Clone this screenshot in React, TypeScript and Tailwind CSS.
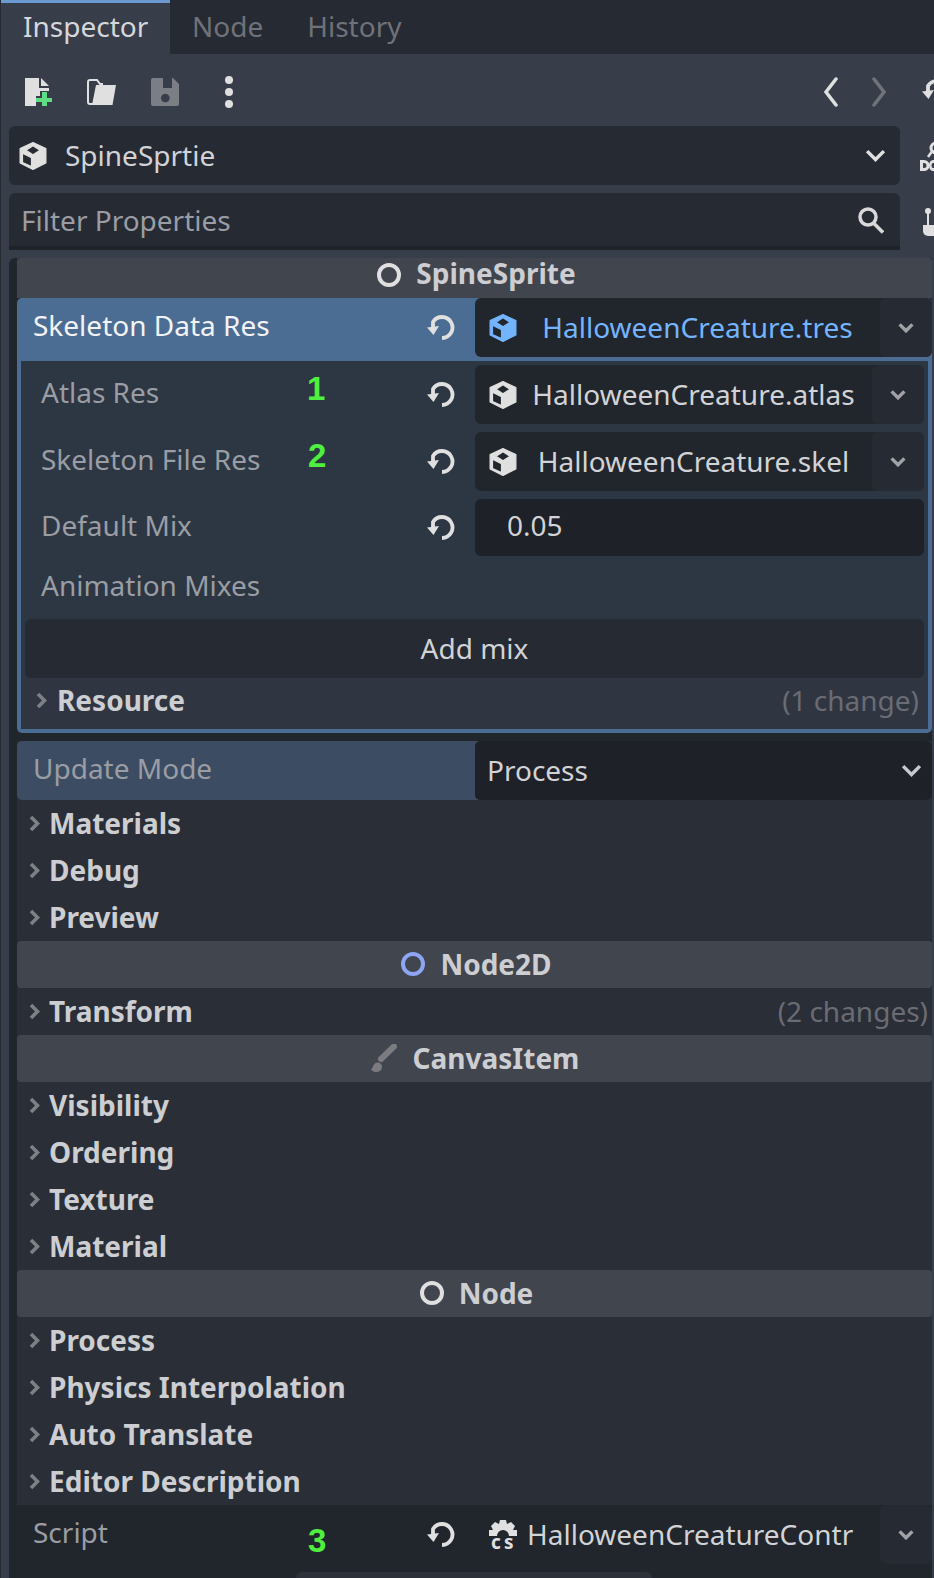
import React from "react";

function ResetIcon() {
  return (
    <svg width="28" height="26" viewBox="0 0 28 26" className="shrink-0">
      <path d="M6 13V7A10.500 10.500 0 1 1 15 23" fill="none" stroke="#e0e0e0" strokeWidth="3.800" />
      <path d="M0 12.500L12 11L6.500 20Z" fill="#e0e0e0" />
    </svg>
  );
}

function CubeIcon({ color = "#e0e0e0" }: { color?: string }) {
  return (
    <svg width="28" height="28" viewBox="0 0 28 28" className="shrink-0">
      <path
        fillRule="evenodd"
        stroke={color}
        strokeWidth="1.200"
        strokeLinejoin="round"
        d="M14 .6L26.900 6.500V21L14 27.400L1.100 21V6.500ZM14 3.800L7 8.300L14 12.800L21 8.300ZM3.500 11.300V20.500L12.500 24.500V15.700Z"
        fill={color}
      />
    </svg>
  );
}

function GearIcon() {
  return (
    <svg width="28" height="34" viewBox="0 0 28 34" className="shrink-0 mt-[5px]">
      <path
        d="M11 0h6l1 4 4-2 4 4-2 4h4v6h-8a6 6 0 0 0-12 0H0v-6h4L2 6l4-4 4 2z"
        fill="#e0e0e0"
      />
      <text x="2" y="28.500" fontSize="19" fontWeight="700" fill="#e0e0e0" fontFamily="'Noto Sans', sans-serif">
        c
      </text>
      <text x="15" y="28.500" fontSize="19" fontWeight="700" fill="#e0e0e0" fontFamily="'Noto Sans', sans-serif">
        s
      </text>
    </svg>
  );
}

function ChevronDown({ size = 16, color = "#a0a2a6" }: { size?: number; color?: string }) {
  return (
    <svg width={size} height={size * 0.7} viewBox="0 0 20 14" className="shrink-0">
      <path d="M2 3l8 8 8-8" fill="none" stroke={color} strokeWidth={(3.4 * 20) / size} />
    </svg>
  );
}

function ChevronRight({ color = "#7d8085" }: { color?: string }) {
  return (
    <svg width="11" height="17" viewBox="0 0 11 17" className="shrink-0">
      <path d="M2 2l6.500 6.500L2 15" fill="none" stroke={color} strokeWidth="3.600" />
    </svg>
  );
}

function Ring({ color = "#e0e0e0" }: { color?: string }) {
  return (
    <svg width="24" height="24" viewBox="0 0 24 24" className="shrink-0 ml-[4px]">
      <circle cx="12" cy="12" r="10" fill="none" stroke={color} strokeWidth="4" />
    </svg>
  );
}

function Brush() {
  return (
    <svg width="28" height="28" viewBox="0 0 28 28" className="shrink-0">
      <path d="M11 15L24 2.500" stroke="#7b7c80" strokeWidth="6" strokeLinecap="round" fill="none" />
      <path d="M1 25.500C3 25 3 19 7 18.500c3-.3 5.500 2 5 5-.5 3-3 4.500-6 4.500-2.500 0-4-1-5-2.500z" fill="#7b7c80" />
    </svg>
  );
}

function SectionHeader({ title, icon }: { title: string; icon: React.ReactNode }) {
  return (
    <div className="h-[47px] shrink-0 flex items-center justify-center gap-[15px] pb-[1px] bg-[#41454e] rounded-[4px] font-bold text-[#cdced1]">
      {icon}
      <span className="-mt-[1px]">{title}</span>
    </div>
  );
}

function Group({ title, note }: { title: string; note?: string }) {
  return (
    <div className="h-[47px] shrink-0 flex items-center pl-[12px] pr-[4px] pb-[1px]">
      <ChevronRight />
      <span className="ml-[9px] -mt-[1px] font-bold text-[#cdced1]">{title}</span>
      {note && <span className="ml-auto -mt-[1px] text-[#696c73]">{note}</span>}
    </div>
  );
}

function Mark({ n, className }: { n: string; className: string }) {
  return (
    <span
      className={`absolute font-['Liberation_Sans',sans-serif] font-bold text-[33px] leading-none text-[#4fef3f] ${className}`}
    >
      {n}
    </span>
  );
}

function ResourceField({ icon, name, nameClass }: { icon: React.ReactNode; name: string; nameClass: string }) {
  return (
    <div className="flex items-center h-[59px] pl-[14px] rounded-[6px] bg-[#21262c]">
      {icon}
      <span className={`flex-1 text-center pr-[2px] -mt-[2px] ${nameClass}`}>{name}</span>
      <div className="w-[52px] h-full flex items-center justify-center rounded-[6px] bg-[#262a32]">
        <ChevronDown />
      </div>
    </div>
  );
}

function SubRow({ label, mark, children }: { label: string; mark?: React.ReactNode; children: React.ReactNode }) {
  return (
    <div className="relative flex items-center">
      <span className="w-[406px] shrink-0 pl-[20px] text-[#9a9da3] -mt-[6px]">{label}</span>
      <ResetIcon />
      <div className="ml-[20px] flex-1 mr-[4px]">{children}</div>
      {mark}
    </div>
  );
}

export default function App() {
  return (
    <div className="w-[934px] h-[1578px] overflow-hidden flex flex-col border-l-[1px] border-[#262a33] bg-[#383d4a] text-[28px] leading-none font-['Noto_Sans',sans-serif]">
      <div className="h-[54px] shrink-0 flex bg-[#262a33]">
        <div className="w-[169px] border-t-[3px] border-[#6a9ad0] bg-[#383d4a] pl-[22px] flex items-center text-[#d6d7da] pb-[6px]">
          Inspector
        </div>
        <div className="ml-[22px] flex items-center text-[#6f7278] pb-[2px]">Node</div>
        <div className="ml-[44px] flex items-center text-[#6f7278] pb-[2px]">History</div>
      </div>

      <div className="h-[72px] shrink-0 flex items-center pl-[24px] pt-[4px]">
        <svg width="28" height="28" viewBox="0 0 28 28">
          <path d="M0 0H14V10H24V13H15V18H11V28H0Z" fill="#e0e0e0" />
          <path d="M16 0L24 8H16Z" fill="#e0e0e0" />
          <path d="M17 14h5v6h5v4h-5v4h-5v-4h-6v-4h6z" fill="#5fdd84" />
        </svg>
        <svg width="29" height="28" viewBox="0 0 29 28" className="ml-[34px]">
          <path d="M6 26H3a2 2 0 0 1-2-2V4a2 2 0 0 1 2-2h7l3 4h3" fill="none" stroke="#e0e0e0" strokeWidth="2" />
          <path d="M9 7H29L25.500 27H5Z" fill="#e0e0e0" />
        </svg>
        <svg width="28" height="28" viewBox="0 0 28 28" className="ml-[35px]">
          <path
            fillRule="evenodd"
            d="M2 0H22L28 6V26a2 2 0 0 1-2 2H2a2 2 0 0 1-2-2V2A2 2 0 0 1 2 0ZM12 0V10H21V0ZM14.300 15.700a4.300 4.300 0 1 0 .01 0Z"
            fill="#7b7e85"
          />
        </svg>
        <svg width="10" height="34" viewBox="0 0 10 34" className="ml-[45px]">
          <circle cx="5" cy="5" r="4" fill="#e0e0e0" />
          <circle cx="5" cy="17" r="4" fill="#e0e0e0" />
          <circle cx="5" cy="29" r="4" fill="#e0e0e0" />
        </svg>
        <svg width="14" height="30" viewBox="0 0 14 30" className="ml-auto">
          <path d="M12 2L2 15l10 13" fill="none" stroke="#e0e0e0" strokeWidth="3.500" strokeLinecap="round" />
        </svg>
        <svg width="14" height="30" viewBox="0 0 14 30" className="ml-[34px]">
          <path d="M2 2l10 13L2 28" fill="none" stroke="#707379" strokeWidth="3.500" strokeLinecap="round" />
        </svg>
        <div className="w-[48px] shrink-0 flex justify-start overflow-hidden pl-[36px]">
          <svg width="28" height="26" viewBox="0 0 28 26" className="shrink-0">
            <path d="M6 13V7A10.500 10.500 0 1 1 15 23" fill="none" stroke="#e0e0e0" strokeWidth="3.800" />
            <path d="M0 12.500L12 11L6.500 20Z" fill="#e0e0e0" />
          </svg>
        </div>
      </div>

      <div className="h-[59px] shrink-0 flex items-center">
        <div className="ml-[8px] w-[891px] shrink-0 h-full flex items-center rounded-[6px] bg-[#262a33] pl-[10px] pr-[14px] text-[#d2d3d6]">
          <CubeIcon />
          <span className="ml-[18px] -mt-[2px]">SpineSprtie</span>
          <span className="ml-auto">
            <ChevronDown size={21} color="#e0e0e0" />
          </span>
        </div>
        <svg width="14" height="32" viewBox="0 0 14 32" className="ml-[20px] shrink-0">
          <circle cx="16" cy="8" r="5" fill="none" stroke="#e0e0e0" strokeWidth="3" />
          <path d="M8 17L13 10" stroke="#e0e0e0" strokeWidth="2.500" />
          <path fillRule="evenodd" d="M0 20h4a5.500 5.500 0 0 1 0 11H0ZM3 23v5h1a2.500 2.500 0 0 0 0-5Z" fill="#e0e0e0" />
          <path d="M14 20h-1a4 5.500 0 0 0 0 11h1v-3h-1a1.500 2.500 0 0 1 0-5h1Z" fill="#e0e0e0" />
        </svg>
      </div>

      <div className="h-[57px] shrink-0 mt-[8px] flex items-center">
        <div className="ml-[8px] w-[891px] shrink-0 h-full flex items-center rounded-t-[6px] border-b-[4px] border-[#1f2229] bg-[#262a33] pl-[12px] pr-[16px] text-[#9a9da3]">
          <span>Filter Properties</span>
          <svg width="26" height="27" viewBox="0 0 26 27" className="ml-auto mt-[2px]">
            <circle cx="10" cy="10" r="8" fill="none" stroke="#d8d8d8" strokeWidth="3.500" />
            <path d="M15.500 16L25 25.500" stroke="#d8d8d8" strokeWidth="3.500" />
          </svg>
        </div>
        <svg width="11" height="28" viewBox="0 0 11 28" className="ml-[23px] shrink-0">
          <circle cx="5" cy="3" r="3" fill="#e0e0e0" />
          <path d="M5 3v14" stroke="#e0e0e0" strokeWidth="2" />
          <path d="M0 17h12v11H5a5 5 0 0 1-5-5Z" fill="#e0e0e0" />
        </svg>
      </div>

      <div className="mt-[8px] ml-[8px] mr-[2px] flex-1 min-h-0 flex flex-col border-l-[8px] border-[#21252c] bg-[#2a2e37] rounded-tl-[6px]">
        <div className="h-[40px] shrink-0 flex items-center justify-center gap-[15px] pb-[7px] bg-[#41454e] rounded-t-[4px] font-bold text-[#cdced1]">
          <Ring />
          <span className="-mt-[3px]">SpineSprite</span>
        </div>

        <div className="bg-[#21252c] pb-[8px]">
          <div className="h-[59px] flex items-center bg-[#4c6d93] rounded-t-[5px]">
            <span className="w-[410px] shrink-0 pl-[16px] text-[#f2f3f5] -mt-[6px]">Skeleton Data Res</span>
            <ResetIcon />
            <div className="ml-[20px] flex-1">
              <ResourceField icon={<CubeIcon color="#74b4ff" />} name="HalloweenCreature.tres" nameClass="text-[#74b4ff]" />
            </div>
          </div>
          <div className="border-[4px] border-[#4c6d93] rounded-b-[5px] bg-[#2d3643] flex flex-col">
            <div className="flex flex-col gap-[8px] pt-[4px]">
              <SubRow label="Atlas Res" mark={<Mark n="1" className="left-[286px] top-[7px]" />}>
                <ResourceField icon={<CubeIcon />} name="HalloweenCreature.atlas" nameClass="text-[#d2d3d6]" />
              </SubRow>
              <SubRow label="Skeleton File Res" mark={<Mark n="2" className="left-[287px] top-[7px]" />}>
                <ResourceField icon={<CubeIcon />} name="HalloweenCreature.skel" nameClass="text-[#d2d3d6]" />
              </SubRow>
              <SubRow label="Default Mix">
                <div className="h-[57px] flex items-center rounded-[6px] bg-[#1e2127] pl-[32px] pb-[5px] text-[#d2d3d6]">0.05</div>
              </SubRow>
            </div>
            <div className="h-[63px] flex items-center pl-[20px] pb-[6px] text-[#9a9da3]">Animation Mixes</div>
            <div className="mx-[4px] h-[59px] flex items-center justify-center rounded-[6px] bg-[#262a32] pb-[2px] text-[#d2d3d6]">
              Add mix
            </div>
            <div className="h-[51px] flex items-center bg-[#303641] pl-[15px] pr-[9px] pb-[6px]">
              <ChevronRight />
              <span className="ml-[10px] -mt-[2px] font-bold text-[#cdced1]">Resource</span>
              <span className="ml-auto -mt-[2px] text-[#696c73]">(1 change)</span>
            </div>
          </div>
        </div>

        <div className="h-[59px] shrink-0 flex items-center bg-[#3c4d63] rounded-[5px]">
          <span className="w-[458px] shrink-0 pl-[16px] text-[#9a9da3] -mt-[6px]">Update Mode</span>
          <div className="flex-1 h-full flex items-center rounded-[5px] bg-[#1e2128] pl-[12px] pr-[10px] text-[#d2d3d6]">
            <span className="-mt-[2px]">Process</span>
            <span className="ml-auto">
              <ChevronDown size={21} color="#c8c9cc" />
            </span>
          </div>
        </div>

        <Group title="Materials" />
        <Group title="Debug" />
        <Group title="Preview" />
        <SectionHeader title="Node2D" icon={<Ring color="#8da5f3" />} />
        <Group title="Transform" note="(2 changes)" />
        <SectionHeader title="CanvasItem" icon={<Brush />} />
        <Group title="Visibility" />
        <Group title="Ordering" />
        <Group title="Texture" />
        <Group title="Material" />
        <SectionHeader title="Node" icon={<Ring />} />
        <Group title="Process" />
        <Group title="Physics Interpolation" />
        <Group title="Auto Translate" />
        <Group title="Editor Description" />

        <div className="relative flex-1 min-h-0 bg-[#21252c] flex flex-col">
          <div className="h-[59px] shrink-0 flex items-center">
            <span className="w-[410px] shrink-0 pl-[16px] text-[#9a9da3] -mt-[6px]">Script</span>
            <ResetIcon />
            <div className="ml-[20px] flex-1 h-full flex items-center pl-[14px] text-[#d2d3d6]">
              <GearIcon />
              <span className="ml-[10px] -mt-[2px]">HalloweenCreatureContr</span>
              <div className="ml-auto w-[52px] h-full flex items-center justify-center rounded-[6px] bg-[#262a32]">
                <ChevronDown />
              </div>
            </div>
          </div>
          <div className="mt-[8px] ml-[279px] w-[356px] flex-1 rounded-t-[6px] bg-[#2d313a]" />
          <Mark n="3" className="left-[291px] top-[19px]" />
        </div>
      </div>
    </div>
  );
}
